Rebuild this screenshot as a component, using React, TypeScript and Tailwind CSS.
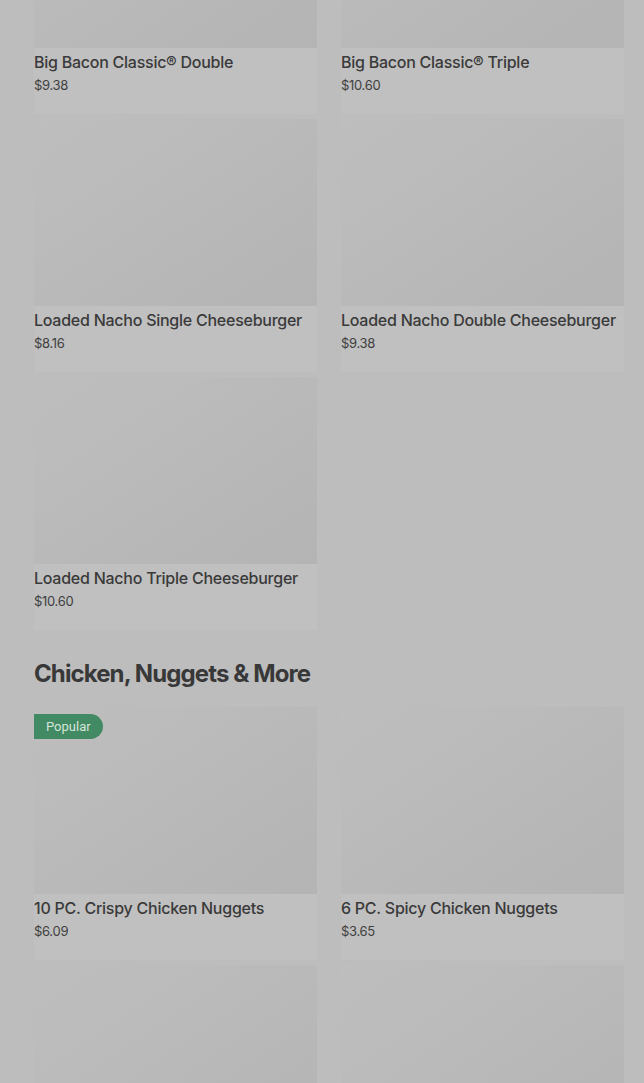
import React from "react";

type MenuItem = {
  name?: string;
  price?: string;
  popular?: boolean;
};

type MenuSection = {
  title?: string;
  items: MenuItem[];
};

const sections: MenuSection[] = [
  {
    items: [
      { name: "Big Bacon Classic® Double", price: "$9.38" },
      { name: "Big Bacon Classic® Triple", price: "$10.60" },
      { name: "Loaded Nacho Single Cheeseburger", price: "$8.16" },
      { name: "Loaded Nacho Double Cheeseburger", price: "$9.38" },
      { name: "Loaded Nacho Triple Cheeseburger", price: "$10.60" },
    ],
  },
  {
    title: "Chicken, Nuggets & More",
    items: [
      { name: "10 PC. Crispy Chicken Nuggets", price: "$6.09", popular: true },
      { name: "6 PC. Spicy Chicken Nuggets", price: "$3.65" },
      // next row is cut off by the bottom of the viewport
      {},
      {},
    ],
  },
];

const ItemCard = ({ item }: { item: MenuItem }) => (
  <div className="bg-[#c0c0c0] pb-[20px]">
    <div className="relative h-[187px] bg-gradient-to-br from-[#bebebe] to-[#b4b4b4]">
      {item.popular && (
        <span className="absolute left-0 top-[7px] h-[25px] pl-[12px] pr-[12px] rounded-r-full bg-[#418a63] text-[#d6e4da] text-[13px] leading-[25px] font-['Roboto',sans-serif]">
          Popular
        </span>
      )}
    </div>
    {item.name && (
      <>
        <p className="mt-[4px] text-[16px] leading-[20px] font-medium tracking-[-0.25px] text-[#3a3a3a] whitespace-nowrap">
          {item.name}
        </p>
        <p className="mt-[4px] text-[13px] leading-[18px] tracking-[-0.3px] text-[#3f3f3f]">
          {item.price}
        </p>
      </>
    )}
  </div>
);

const App = () => {
  return (
    <div className="h-[1083px] bg-[#bdbdbd] overflow-hidden font-['Inter',sans-serif]">
      <div className="-mt-[139px] pl-[34px] pr-[20px]">
        {sections.map((section, index) => (
          <section key={index} className={index > 0 ? "mt-[28px]" : ""}>
            {section.title && (
              <h2 className="text-[24px] leading-[32px] font-bold tracking-[-0.9px] text-[#383838] mb-[17px]">
                {section.title}
              </h2>
            )}
            <div className="grid grid-cols-2 gap-x-[24px] gap-y-[5px]">
              {section.items.map((item, i) => (
                <ItemCard key={i} item={item} />
              ))}
            </div>
          </section>
        ))}
      </div>
    </div>
  );
};

export default App;
